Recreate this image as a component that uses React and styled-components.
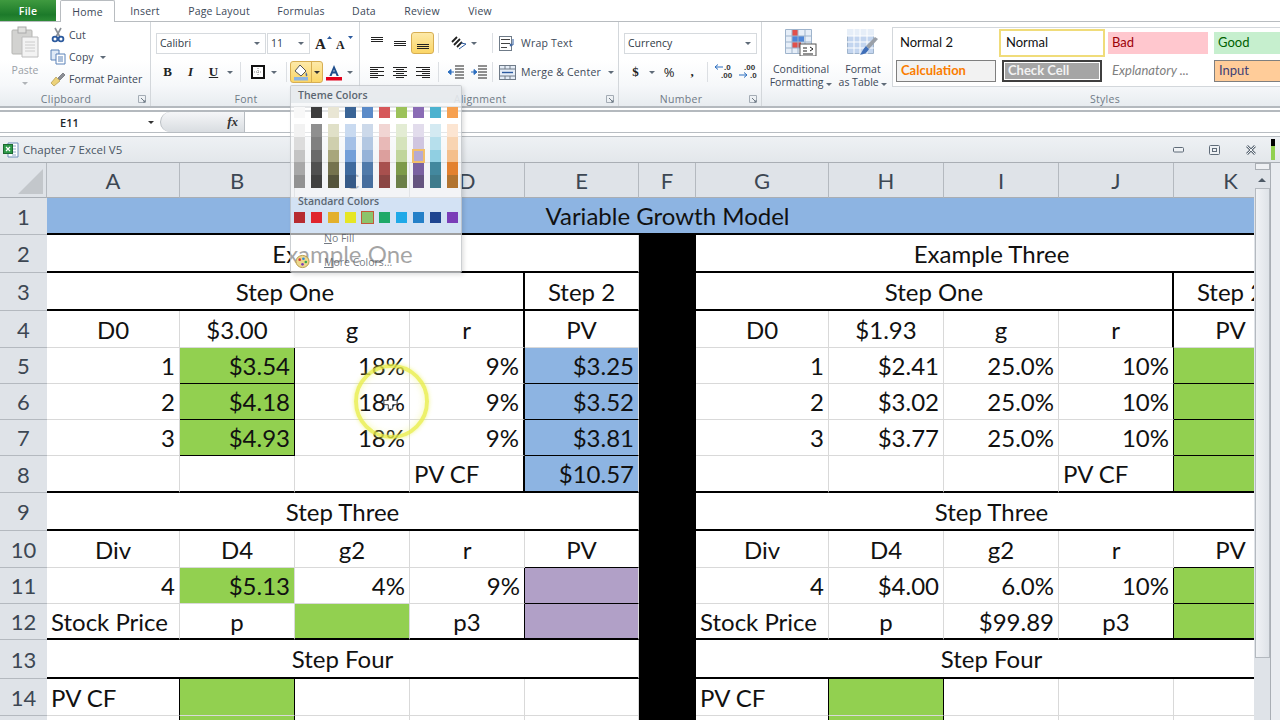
import styled, {createGlobalStyle} from 'styled-components';

const BLUE = '#8db4e2';
const GREEN = '#92d050';
const PURPLE = '#b1a0c7';
const THICK = '2px solid #000';
const THIN = '1px solid #000';

const Global = createGlobalStyle`
  html, body {
    margin: 0;
    padding: 0;
    background: #fff;
  }
  * {
    box-sizing: border-box;
  }
`;

const Page = styled.div`
  position: relative;
  display: flex;
  flex-direction: column;
  width: 1280px;
  height: 720px;
  overflow: hidden;
  font-family: 'Open Sans', sans-serif;
  color: #3c4858;
`;

const Tabs = styled.div`
  display: flex;
  align-items: stretch;
  height: 22px;
  border-bottom: 1px solid #b8bcc0;
  font-size: 10.5px;
  letter-spacing: 0.2px;
`;

const FileTab = styled.div`
  display: flex;
  align-items: center;
  justify-content: center;
  width: 56px;
  margin-right: 4px;
  color: #fff;
  font-weight: 600;
  background: linear-gradient(#3f9a3f, #1c7a2a 70%, #2c8b35);
`;

const Tab = styled.div`
  display: flex;
  align-items: center;
  justify-content: center;
  width: ${p => p.$w}px;
  height: ${p => (p.$active ? 22 : 21)}px;
  ${p => p.$active && `
    background: #fff;
    border: 1px solid #b8bcc0;
    border-bottom: 0;
    border-radius: 2px 2px 0 0;
  `}
`;

const Ribbon = styled.div`
  display: flex;
  height: 86px;
  background: linear-gradient(#fff 45%, #f6f8fa 75%, #e8ecf0);
  border-bottom: 2px solid #b4b9be;
  font-size: 10.5px;
`;

const Group = styled.div`
  position: relative;
  display: flex;
  flex-direction: column;
  width: ${p => p.$w}px;
  flex: none;
  border-right: ${p => (p.$last ? '0' : '1px solid #d3d7db')};
`;

const GroupBody = styled.div`
  flex: 1;
  display: flex;
  min-height: 0;
  padding-left: ${p => p.$pl || 0}px;
`;

const GroupLabel = styled.div`
  height: 13px;
  line-height: 12px;
  text-align: center;
  padding: ${p => (p.$styles ? '0 0 0 168px' : '0 18px 0 0')};
  color: #6f7a86;
  font-size: 10.5px;
  letter-spacing: 0.3px;
`;

const Launcher = styled.svg`
  position: absolute;
  right: 4px;
  bottom: 3px;
  width: 8px;
  height: 8px;
`;

const PasteBlock = styled.div`
  display: flex;
  flex-direction: column;
  align-items: center;
  width: 50px;
  padding-top: 4px;
  color: #9aa0a6;
  line-height: 13px;
`;

const PasteLabel = styled.span`
  margin: 6px 0 5px;
`;

const SmallList = styled.div`
  display: flex;
  flex-direction: column;
  gap: 6px;
  padding-top: 5px;
`;

const SmallItem = styled.div`
  display: flex;
  align-items: center;
  gap: 3px;
  height: 16px;
  white-space: nowrap;
`;

const Caret = styled.span`
  display: inline-block;
  width: 0;
  height: 0;
  flex: none;
  border-left: 3px solid transparent;
  border-right: 3px solid transparent;
  border-top: 3px solid ${p => p.$c || '#5f6b78'};
  margin-left: ${p => p.$ml || 0}px;
`;

const Rows = styled.div`
  display: flex;
  flex-direction: column;
  gap: 7px;
  padding: 10px 0 0 ${p => p.$pl || 0}px;
`;

const Row = styled.div`
  display: flex;
  align-items: center;
  height: 22px;
`;

const ComboBox = styled.div`
  display: flex;
  align-items: center;
  justify-content: space-between;
  width: ${p => p.$w}px;
  height: 21px;
  margin-right: ${p => p.$mr || 0}px;
  padding: 0 5px 0 3px;
  background: #fff;
  border: 1px solid #d6dade;
  color: #2f3a46;
  font-size: 10.5px;
`;

const Btn = styled.div`
  display: flex;
  align-items: center;
  justify-content: center;
  width: ${p => p.$w || 23}px;
  height: 22px;
  flex: none;
  color: #222;
  font-family: ${p => (p.$plain ? "'Open Sans', sans-serif" : "'Liberation Serif', serif")};
  font-weight: ${p => (p.$plain ? 400 : 700)};
  font-style: ${p => (p.$italic ? 'italic' : 'normal')};
  text-decoration: ${p => (p.$under ? 'underline' : 'none')};
  font-size: 13px;
  ${p => p.$on && `
    background: linear-gradient(#fde9a8, #fbd667);
    border: 1px solid #d7ae52;
    border-radius: 3px;
  `}
`;

const SplitBtn = styled.div`
  display: flex;
  align-items: center;
  width: 33px;
  height: 22px;
  flex: none;
  background: linear-gradient(#fde9a8, #fbd667);
  border: 1px solid #d7ae52;
  border-radius: 3px;
`;

const SplitMain = styled.div`
  display: flex;
  align-items: center;
  justify-content: center;
  width: 21px;
  height: 100%;
  border-right: 1px solid #d7ae52;
`;

const SplitDrop = styled.div`
  flex: 1;
  display: flex;
  align-items: center;
  justify-content: center;
`;

const Sep = styled.div`
  width: 1px;
  height: 20px;
  flex: none;
  background: #dcdfe3;
  margin: 0 ${p => p.$r ?? p.$l ?? 6}px 0 ${p => p.$l ?? 6}px;
`;

const TextBtn = styled.div`
  display: flex;
  align-items: center;
  gap: 4px;
  white-space: nowrap;
  font-size: 10.5px;
  letter-spacing: 0.2px;
`;

const BigAction = styled.div`
  display: flex;
  flex-direction: column;
  align-items: center;
  width: ${p => p.$w}px;
  padding-top: 7px;
  line-height: 13px;
  text-align: center;
  white-space: nowrap;
  font-size: 10.5px;
`;

const BigIcon = styled.div`
  height: 34px;
`;

const StyleGallery = styled.div`
  display: grid;
  grid-template-columns: repeat(4, 100px);
  grid-template-rows: 22px 22px;
  gap: 6px;
  align-self: flex-start;
  width: 388px;
  height: 60px;
  margin: 5px 0 0 -2px;
  padding: 4px 0 0 3px;
  background: #fff;
  border: 1px solid #d3d7db;
  border-right: 0;
  overflow: hidden;
`;

const StyleCell = styled.div`
  display: flex;
  align-items: center;
  padding: 0 0 2px 4px;
  font-family: Lato, sans-serif;
  font-size: 13px;
  font-style: ${p => (p.$italic ? 'italic' : 'normal')};
  font-weight: ${p => (p.$bold ? 700 : 400)};
  color: ${p => p.$c};
  background: ${p => p.$bg || 'transparent'};
  border: ${p => p.$border || '0'};
  ${p => p.$selected && `
    box-shadow: 0 0 0 1px #fff, 0 0 0 3px #f0dc7a;
  `}
  ${p => p.$double && `
    outline: 1px solid #fff;
    outline-offset: -3px;
  `}
`;

const FormulaBar = styled.div`
  display: flex;
  height: 23px;
  background: #fff;
  border-top: 2px solid #b4b9be;
  border-bottom: 1px solid #b8bdc2;
  margin-top: 2px;
`;

const NameBox = styled.div`
  display: flex;
  align-items: center;
  width: 160px;
  padding: 0 6px 0 60px;
  justify-content: space-between;
  color: #20262c;
  font-size: 11px;
  font-weight: 600;
`;

const FxPill = styled.div`
  display: flex;
  align-items: center;
  justify-content: flex-end;
  width: 85px;
  padding-right: 6px;
  background: linear-gradient(#f5f6f8, #d9dde1);
  border: 1px solid #b8bdc2;
  border-width: 0 1px 0 1px;
  border-radius: 11px 0 0 11px;
  font-family: 'Liberation Serif', serif;
  font-style: italic;
  font-weight: 700;
  font-size: 13px;
  color: #333;
`;

const SheetWindow = styled.div`
  flex: 1;
  display: flex;
  flex-direction: column;
  min-height: 0;
  margin-top: 3px;
  border-top: 1px solid #b8bdc2;
`;

const TitleBar = styled.div`
  display: flex;
  align-items: center;
  flex: none;
  height: 26px;
  padding-left: 3px;
  background: linear-gradient(#eef1f4, #e3e7eb);
  border-bottom: 1px solid #a9aeb4;
  font-size: 11.5px;
  color: #4a5664;
`;

const TitleText = styled.span`
  margin-left: 4px;
  flex: 1;
`;

const WinButtons = styled.div`
  display: flex;
  align-items: center;
  gap: 25px;
  margin-right: 14px;
`;

const Level = styled.div`
  width: 4px;
  height: 21px;
  margin-right: 5px;
  background: linear-gradient(#000 35%, ${GREEN} 35%);
`;

const SheetBody = styled.div`
  flex: 1;
  display: flex;
  min-height: 0;
`;

const Grid = styled.div`
  display: grid;
  width: 1254px;
  flex: none;
  overflow: hidden;
  grid-template-columns: 47px 133px 115px 115px 115px 114px 57px 133px 115px 115px 115px 114px;
  grid-template-rows: 35px 37px 38px 38px 37px 36px 36px 36px 37px 38px 37px 36px 36px 39px 37px 36px;
  font-family: Lato, sans-serif;
  color: #111;
`;

const ColHead = styled.div`
  display: flex;
  align-items: center;
  justify-content: center;
  background: #dfe3e8;
  border-right: 1px solid #b4b9bf;
  border-bottom: 1px solid #a9aeb4;
  color: #3d4753;
  font-size: 22px;
`;

const Corner = styled(ColHead)`
  justify-content: flex-end;
  align-items: flex-end;
  padding: 0 3px 3px 0;
`;

const RowHead = styled.div`
  display: flex;
  align-items: center;
  justify-content: center;
  background: #dfe3e8;
  border-bottom: 1px solid #b4b9bf;
  color: #3d4753;
  font-size: 22px;
`;

const Cell = styled.div`
  display: flex;
  align-items: center;
  justify-content: ${p => p.$a || 'flex-start'};
  grid-column: span ${p => p.$span || 1};
  padding: 0 4px;
  overflow: hidden;
  white-space: nowrap;
  font-size: 24px;
  background: ${p => p.$bg || '#fff'};
  border-right: ${p => p.$rb || '1px solid #d9d9d9'};
  border-bottom: ${p => p.$bb || '1px solid #d9d9d9'};
`;

const BlackCell = styled.div`
  background: #000;
`;

const Scrollbar = styled.div`
  display: flex;
  flex-direction: column;
  align-items: center;
  width: 16px;
  flex: none;
  background: #dfe3e8;
`;

const SplitBox = styled.div`
  width: 15px;
  height: 7px;
  margin-bottom: 8px;
  background: #eef0f3;
  border: 1px solid #a9aeb4;
`;

const ArrowUp = styled.div`
  width: 0;
  height: 0;
  margin-bottom: 6px;
  border-left: 4px solid transparent;
  border-right: 4px solid transparent;
  border-bottom: 4px solid #4e5a66;
`;

const Thumb = styled.div`
  width: 15px;
  height: 470px;
  background: linear-gradient(90deg, #f0f2f5, #dfe3e8);
  border: 1px solid #b4b9bf;
`;

const RightEdge = styled.div`
  flex: 1;
  background: #e9ecf0;
  border-left: 1px solid #a9aeb4;
`;

const ColorMenu = styled.div`
  position: absolute;
  left: 290px;
  top: 85px;
  width: 172px;
  height: 188px;
  background: rgba(255, 255, 255, 0.62);
  border: 1px solid rgba(170, 175, 180, 0.6);
  border-radius: 2px;
  box-shadow: 2px 2px 4px rgba(0, 0, 0, 0.12);
  font-size: 10.5px;
`;

const MenuHead = styled.div`
  height: 17px;
  margin-top: ${p => p.$mt || 0}px;
  padding-left: 7px;
  line-height: 19px;
  font-weight: 600;
  color: #5b6671;
  background: ${p => p.$bg || 'rgba(225, 229, 233, 0.75)'};
`;

const SwatchRow = styled.div`
  display: grid;
  grid-template-columns: repeat(10, 11px);
  column-gap: 6px;
  margin: ${p => p.$m || '4px 0 0 3px'};
`;

const Swatch = styled.div`
  width: 11px;
  height: 11px;
  background: ${p => p.$c};
  ${p => p.$pick && 'box-shadow: 0 0 0 1px #c25a3a;'}
`;

const Ramp = styled.div`
  display: flex;
  flex-direction: column;
`;

const RampStep = styled.div`
  position: relative;
  height: 12.8px;
  background: ${p => p.$c};
  ${p => p.$pick && 'box-shadow: inset 0 0 0 1px #f2bf6a, 0 0 0 1px #f2bf6a; z-index: 1;'}
`;

const MenuItem = styled.div`
  display: flex;
  align-items: center;
  height: 24px;
  padding-left: 1px;
  gap: 12px;
  color: rgba(70, 78, 88, 0.75);
`;

const MenuIconBox = styled.div`
  display: flex;
  align-items: center;
  justify-content: center;
  width: 20px;
  height: 18px;
`;

const Ring = styled.div`
  position: absolute;
  left: 354px;
  top: 364px;
  width: 75px;
  height: 75px;
  border-radius: 50%;
  border: 4px solid rgba(232, 238, 70, 0.8);
  box-shadow: 0 0 4px rgba(232, 238, 70, 0.6), inset 0 0 7px rgba(240, 244, 120, 0.55);
`;

const Pointer = styled.svg`
  position: absolute;
  left: 383px;
  top: 395px;
  width: 15px;
  height: 15px;
`;

const Paste = () => (
    <svg width="28" height="32" viewBox="0 0 28 32">
        <rect x="1" y="4" width="20" height="24" rx="1" fill="#d2d2d0" stroke="#b5b5b2"/>
        <rect x="7" y="1" width="8" height="6" fill="#e0e0de" stroke="#aaa"/>
        <path d="M11 11h16v20h-16z" fill="#f3f3f3" stroke="#bdbdbd"/>
        <path d="M14 16h10M14 19h10M14 22h10M14 25h10" stroke="#ccc"/>
    </svg>
);

const Scissors = () => (
    <svg width="16" height="16" viewBox="0 0 16 16">
        <path d="M5 1l5 9M11 1l-5 9" stroke="#8a8f96" strokeWidth="1.6"/>
        <circle cx="5" cy="12" r="2.4" fill="none" stroke="#2c5a9e" strokeWidth="1.8"/>
        <circle cx="11" cy="12" r="2.4" fill="none" stroke="#2c5a9e" strokeWidth="1.8"/>
    </svg>
);

const Copy = () => (
    <svg width="16" height="16" viewBox="0 0 16 16">
        <path d="M1 1h8v10h-8z" fill="#dfeaf7" stroke="#5a82b8"/>
        <path d="M6 5h9v10h-9z" fill="#fff" stroke="#5a82b8"/>
        <path d="M8 8h5M8 10h5M8 12h5" stroke="#5a82b8"/>
    </svg>
);

const Brush = () => (
    <svg width="16" height="16" viewBox="0 0 16 16">
        <path d="M1 12l5-6 4 4-6 5z" fill="#ecd27a" stroke="#a58a3a" strokeWidth="0.6"/>
        <path d="M8 7l5-5 2 2-5 5z" fill="#8c8f96" stroke="#55585e" strokeWidth="0.6"/>
    </svg>
);

const BorderIcon = () => (
    <svg width="14" height="14" viewBox="0 0 14 14">
        <rect x="1" y="1" width="12" height="12" fill="#fff" stroke="#111" strokeWidth="2"/>
        <path d="M7 3v8M3 7h8" stroke="#888" strokeDasharray="1 1"/>
    </svg>
);

const FillIcon = () => (
    <svg width="16" height="17" viewBox="0 0 16 17">
        <path d="M7 1l6 6-5 5-6-5z" fill="#fff" stroke="#555"/>
        <path d="M13 8c1 2 2 3 1 4s-2-1-1-4z" fill="#4a6fa8"/>
        <rect x="1" y="13" width="14" height="3.5" fill="#8db4e2"/>
    </svg>
);

const FontColor = () => (
    <svg width="16" height="17" viewBox="0 0 16 17">
        <path d="M8 1l-4.600 11h2.200l1-2.600h3l1 2.600h2.200zM7.300 7.600L8 5.600l.7 2z" fill="#1f4e8c"/>
        <rect x="0" y="13" width="16" height="3.5" fill="#e2001a"/>
    </svg>
);

const GrowFont = ({size, up}) => (
    <svg width="18" height="16" viewBox="0 0 18 16">
        <text x="1" y="14" fontFamily="Liberation Serif, serif" fontWeight="700" fontSize={size} fill="#222">A</text>
        <path d={up ? 'M13 4l2.500-3 2.500 3z' : 'M13 1l2.500 3 2.500-3z'} fill="#2c5a9e"/>
    </svg>
);

const Lines = ({rows}) => (
    <svg width="16" height="14" viewBox="0 0 16 14">
        {rows.map(([x1, x2, y]) => (
            <path key={y} d={`M${x1} ${y + 0.5}H${x2}`} stroke="#222"/>
        ))}
    </svg>
);

const Orient = () => (
    <svg width="16" height="14" viewBox="0 0 16 14">
        <path d="M1 6l5-5M3 9l6-6M6 11l5-5" stroke="#222" strokeWidth="1.8"/>
        <path d="M8 13l7-5-5-1" fill="none" stroke="#2c5a9e"/>
    </svg>
);

const Indent = ({flip}) => (
    <svg width="16" height="14" viewBox="0 0 16 14">
        <path d="M7 1h9M7 4h9M7 7h9M7 10h9M7 13h9" stroke="#222"/>
        <path d={flip ? 'M0 7h4M3 4.500l3 2.500-3 2.500z' : 'M6 7h-4M3 4.500l-3 2.500 3 2.500z'} stroke="#2c6fc0" fill="#2c6fc0"/>
    </svg>
);

const WrapIcon = () => (
    <svg width="18" height="15" viewBox="0 0 18 15">
        <rect x="0.500" y="0.500" width="12" height="14" fill="#fff" stroke="#6f7b88"/>
        <path d="M2 3.500h9M2 7.500h9M2 11.500h6" stroke="#444"/>
        <path d="M14 3v6h-3l1-1.500M11 9l1 1.500" fill="none" stroke="#2c5a9e"/>
    </svg>
);

const MergeIcon = () => (
    <svg width="18" height="15" viewBox="0 0 18 15">
        <rect x="0.500" y="0.500" width="16" height="14" fill="#e5edf7" stroke="#6f7b88"/>
        <path d="M0 4h17M0 11h17M6 0v4M11 0v4M6 11v4M11 11v4" stroke="#6f7b88"/>
        <path d="M3 7.500h11" stroke="#2c5a9e" strokeWidth="1.400"/>
    </svg>
);

const Decimal = ({flip}) => (
    <svg width="22" height="18" viewBox="0 0 22 18" fontFamily="Liberation Sans, sans-serif" fontSize="8" fontWeight="700" fill="#333">
        <text x={flip ? 6 : 10} y="7">{flip ? '.00' : '.0'}</text>
        <text x={flip ? 12 : 7} y="15">{flip ? '.0' : '.00'}</text>
        <path d={flip ? 'M1 12h8l-3-2.500M9 12l-3 2.500' : 'M9 4h-8l3-2.500M1 4l3 2.500'} fill="none" stroke="#2c6fc0"/>
    </svg>
);

const CondFormat = () => (
    <svg width="32" height="27" viewBox="0 0 32 27">
        <path d="M0.500 0.500h26v24h-26z" fill="#e6eef8" stroke="#9fb4cc"/>
        <rect x="7" y="1" width="6" height="6" fill="#e2504a"/>
        <rect x="7" y="7" width="12" height="6" fill="#4f86d8"/>
        <rect x="7" y="13" width="9" height="6" fill="#e2504a"/>
        <path d="M7 0v25M13 0v25M20 0v25M0 7h27M0 13h27M0 19h27" stroke="#9fb4cc"/>
        <rect x="15" y="15" width="16" height="12" fill="#fff" stroke="#555"/>
        <path d="M18 19h4M18 22h4M25 18l3 2-3 2M18 25h10" fill="none" stroke="#222"/>
    </svg>
);

const FormatTable = () => (
    <svg width="32" height="28" viewBox="0 0 32 28">
        <path d="M0.500 0.500h26v24h-26z" fill="#c3d5ef" stroke="#9fb4cc"/>
        <path d="M0 0h27v7h-27z" fill="#e6eef8"/>
        <path d="M7 0v25M13 0v25M20 0v25M0 7h27M0 13h27M0 19h27" stroke="#fff"/>
        <path d="M28 8l3 2-9 10-3-3z" fill="#9aa0a8"/>
        <path d="M19 17l3 3c-2 4-5 5-9 6 2-3 3-6 6-9z" fill="#3f6eb8"/>
    </svg>
);

const ExcelDoc = () => (
    <svg width="16" height="16" viewBox="0 0 16 16">
        <path d="M5 1h10v14h-10z" fill="#fff" stroke="#6f8fb8"/>
        <path d="M9 4h4M9 7h4M9 10h4M9 13h4" stroke="#8fa8c8"/>
        <rect x="0.500" y="2.500" width="9" height="9" fill="#2f9a4a" stroke="#1c6a30"/>
        <path d="M3 5l4 4M7 5l-4 4" stroke="#fff" strokeWidth="1.200"/>
    </svg>
);

const Palette = () => (
    <svg width="15" height="15" viewBox="0 0 16 16">
        <ellipse cx="8" cy="8" rx="7" ry="6.500" fill="#edd78c" stroke="#b59a48"/>
        <circle cx="5" cy="6" r="1.400" fill="#d83a3a"/>
        <circle cx="9" cy="5" r="1.400" fill="#2f8ad8"/>
        <circle cx="11.500" cy="8.500" r="1.400" fill="#3aa84a"/>
        <circle cx="8" cy="11" r="1.400" fill="#7a3db8"/>
    </svg>
);

const LauncherIcon = () => (
    <Launcher viewBox="0 0 8 8">
        <path d="M0.500 0.500h7v7h-7z" fill="none" stroke="#a4acb5"/>
        <path d="M3 3l4 4M7 5v2h-2" fill="none" stroke="#6f7a86"/>
    </Launcher>
);

const WinMin = () => (
    <svg width="11" height="6" viewBox="0 0 11 6">
        <rect x="0.500" y="0.500" width="10" height="4.500" rx="1" fill="#eef1f4" stroke="#5f6b78"/>
    </svg>
);

const WinMax = () => (
    <svg width="11" height="10" viewBox="0 0 11 10">
        <rect x="0.500" y="0.500" width="10" height="9" rx="1" fill="#eef1f4" stroke="#5f6b78"/>
        <rect x="3.500" y="3.500" width="4" height="3" fill="none" stroke="#5f6b78"/>
    </svg>
);

const WinClose = () => (
    <svg width="12" height="10" viewBox="0 0 12 10">
        <path d="M2 1l8 8M10 1l-8 8" stroke="#5f6b78" strokeWidth="2.600"/>
        <path d="M2 1l8 8M10 1l-8 8" stroke="#f2f4f6" strokeWidth="1"/>
    </svg>
);

const themeTop = ['#f8f8f8', '#3d3d3d', '#e9e6d4', '#3a6496', '#5b8bc8', '#d6585a', '#9cc25a', '#8a6cb5', '#4cb2cf', '#f6a050'];

const themeRamps = [
    ['#f2f2f2', '#dcdcdc', '#c4c4c4', '#a8a8a8', '#929292'],
    ['#8f8f8f', '#808080', '#6a6a6a', '#505050', '#404040'],
    ['#e0e0c8', '#cfcfae', '#a8a67c', '#75734e', '#55543c'],
    ['#c9daf0', '#a4c0e6', '#739fd8', '#3f6a9e', '#365a88'],
    ['#ccd9ea', '#b3c8e2', '#96b3d8', '#507aaa', '#466e9e'],
    ['#f1d5d3', '#e8b9b7', '#dc9f9d', '#a8504e', '#8b4644'],
    ['#e3ecd4', '#d5e3bc', '#c0d59c', '#7d9a4a', '#6b7f48'],
    ['#e2dcec', '#d0c6e0', '#b6aad2', '#7a62a0', '#65557f'],
    ['#d4eaf2', '#b6dfec', '#90cfe2', '#43889e', '#3f7b8c'],
    ['#fce5d2', '#f8d4b2', '#f4bf8c', '#e3812f', '#b27430'],
];

const standard = ['#b72b30', '#e0252e', '#e3b02c', '#e6e625', '#8cc46c', '#1fa968', '#1ea9e8', '#2480c8', '#1f4590', '#7a3db8'];

const colLetters = ['A', 'B', 'C', 'D', 'E', 'F', 'G', 'H', 'I', 'J', 'K'];

const R = 'flex-end';
const C = 'center';

const num = (t, extra) => ({t, a: R, ...extra});
const mid = (t, extra) => ({t, a: C, ...extra});
const blank = extra => ({t: '', ...extra});

// a row of five cells, for either block
const header = (...names) => names.map((n, i) => mid(n, i === 3 ? {rb: THICK} : {}));
const wide = (t, span = 5) => [mid(t, {span, bb: THICK})];

const leftBlock = [
    wide('Example One'),
    [mid('Step One', {span: 4, bb: THICK, rb: THICK}), mid('Step 2', {bb: THICK})],
    header('D0', '$3.00', 'g', 'r', 'PV'),
    [num('1'), num('$3.54', {bg: GREEN, rb: THIN, bb: THIN}), num('18%'), num('9%', {rb: THICK}), num('$3.25', {bg: BLUE, bb: THIN})],
    [num('2'), num('$4.18', {bg: GREEN, rb: THIN, bb: THIN}), num('18%'), num('9%', {rb: THICK}), num('$3.52', {bg: BLUE, bb: THIN})],
    [num('3'), num('$4.93', {bg: GREEN, rb: THIN, bb: THIN}), num('18%'), num('9%', {rb: THICK}), num('$3.81', {bg: BLUE, bb: THIN})],
    [blank({bb: THICK}), blank({bb: THICK}), blank({bb: THICK}), {t: 'PV CF', bb: THICK, rb: THICK}, num('$10.57', {bg: BLUE, bb: THICK})],
    wide('Step Three'),
    [mid('Div'), mid('D4'), mid('g2'), mid('r'), mid('PV', {bb: THIN})],
    [num('4'), num('$5.13', {bg: GREEN}), num('4%'), num('9%', {rb: THIN}), blank({bg: PURPLE, bb: THIN})],
    [{t: 'Stock Price', bb: THICK}, mid('p', {bb: THICK}), blank({bg: GREEN, bb: THICK}), mid('p3', {bb: THICK, rb: THIN}), blank({bg: PURPLE, bb: THICK})],
    wide('Step Four'),
    [{t: 'PV CF', rb: THIN}, blank({bg: GREEN, rb: THIN}), blank(), blank(), blank()],
    [blank({rb: THIN}), blank({bg: GREEN, rb: THIN}), blank(), blank(), blank()],
];

const rightBlock = [
    wide('Example Three'),
    [mid('Step One', {span: 4, bb: THICK, rb: THICK}), {t: 'Step 2', a: C, bb: THICK}],
    header('D0', '$1.93', 'g', 'r', 'PV'),
    [num('1'), num('$2.41'), num('25.0%'), num('10%', {rb: THIN}), blank({bg: GREEN, bb: THIN})],
    [num('2'), num('$3.02'), num('25.0%'), num('10%', {rb: THIN}), blank({bg: GREEN, bb: THIN})],
    [num('3'), num('$3.77'), num('25.0%'), num('10%', {rb: THIN}), blank({bg: GREEN, bb: THIN})],
    [blank({bb: THICK}), blank({bb: THICK}), blank({bb: THICK}), {t: 'PV CF', bb: THICK, rb: THIN}, blank({bg: GREEN, bb: THICK})],
    wide('Step Three'),
    [mid('Div'), mid('D4'), mid('g2'), mid('r'), mid('PV', {bb: THIN})],
    [num('4'), num('$4.00'), num('6.0%'), num('10%', {rb: THIN}), blank({bg: GREEN, bb: THIN})],
    [{t: 'Stock Price', bb: THICK}, mid('p', {bb: THICK}), num('$99.89', {bb: THICK}), mid('p3', {bb: THICK, rb: THIN}), blank({bg: GREEN, bb: THICK})],
    wide('Step Four'),
    [{t: 'PV CF', rb: THIN}, blank({bg: GREEN, rb: THIN}), blank(), blank(), blank()],
    [blank({rb: THIN}), blank({bg: GREEN, rb: THIN}), blank(), blank(), blank()],
];

const renderCells = (cells, key) => cells.map((c, i) => (
    <Cell key={`${key}-${i}`} $a={c.a} $span={c.span} $bg={c.bg} $rb={c.rb} $bb={c.bb}>{c.t}</Cell>
));

const topLines = [[2, 14, 1], [2, 14, 3], [2, 14, 5]];
const midLines = [[2, 14, 5], [2, 14, 7], [2, 14, 9]];
const lowLines = [[2, 14, 8], [2, 14, 10], [2, 14, 12]];
const leftLines = [[1, 15, 2], [1, 9, 4], [1, 15, 6], [1, 9, 8], [1, 15, 10], [1, 9, 12]];
const centerLines = [[1, 15, 2], [4, 12, 4], [1, 15, 6], [4, 12, 8], [1, 15, 10], [4, 12, 12]];
const rightLines = [[1, 15, 2], [7, 15, 4], [1, 15, 6], [7, 15, 8], [1, 15, 10], [7, 15, 12]];

const SheetRow = ({n, left, right}) => (
    <>
        <RowHead>{n}</RowHead>
        {renderCells(left, `l${n}`)}
        <BlackCell/>
        {renderCells(right, `r${n}`)}
    </>
);

const App = () => (
    <Page>
        <Global/>
        <Tabs>
            <FileTab>File</FileTab>
            <Tab $w={55} $active>Home</Tab>
            <Tab $w={60}>Insert</Tab>
            <Tab $w={88}>Page Layout</Tab>
            <Tab $w={76}>Formulas</Tab>
            <Tab $w={50}>Data</Tab>
            <Tab $w={66}>Review</Tab>
            <Tab $w={50}>View</Tab>
        </Tabs>
        <Ribbon>
            <Group $w={151}>
                <GroupBody>
                    <PasteBlock>
                        <Paste/>
                        <PasteLabel>Paste</PasteLabel>
                        <Caret $c="#b0b4b8"/>
                    </PasteBlock>
                    <SmallList>
                        <SmallItem><Scissors/>Cut</SmallItem>
                        <SmallItem><Copy/>Copy<Caret $ml={3}/></SmallItem>
                        <SmallItem><Brush/>Format Painter</SmallItem>
                    </SmallList>
                </GroupBody>
                <GroupLabel>Clipboard</GroupLabel>
                <LauncherIcon/>
            </Group>
            <Group $w={209}>
                <GroupBody>
                    <Rows $pl={5}>
                        <Row>
                            <ComboBox $w={110} $mr={1}>Calibri<Caret/></ComboBox>
                            <ComboBox $w={43} $mr={2}>11<Caret/></ComboBox>
                            <Btn $w={22}><GrowFont size={15} up/></Btn>
                            <Btn $w={20}><GrowFont size={12}/></Btn>
                        </Row>
                        <Row>
                            <Btn>B</Btn>
                            <Btn $italic>I</Btn>
                            <Btn $under>U</Btn>
                            <Btn $w={9}><Caret/></Btn>
                            <Sep/>
                            <Btn $w={22}><BorderIcon/></Btn>
                            <Btn $w={9}><Caret/></Btn>
                            <Sep $l={8} $r={3}/>
                            <SplitBtn>
                                <SplitMain><FillIcon/></SplitMain>
                                <SplitDrop><Caret $c="#333"/></SplitDrop>
                            </SplitBtn>
                            <Btn $w={22}><FontColor/></Btn>
                            <Btn $w={9}><Caret/></Btn>
                        </Row>
                    </Rows>
                </GroupBody>
                <GroupLabel>Font</GroupLabel>
            </Group>
            <Group $w={259}>
                <GroupBody>
                    <Rows $pl={5}>
                        <Row>
                            <Btn><Lines rows={topLines}/></Btn>
                            <Btn><Lines rows={midLines}/></Btn>
                            <Btn $on><Lines rows={lowLines}/></Btn>
                            <Sep $l={4} $r={9}/>
                            <Btn $w={22}><Orient/></Btn>
                            <Btn $w={8}><Caret/></Btn>
                            <Sep $l={14} $r={6}/>
                            <TextBtn><WrapIcon/>Wrap Text</TextBtn>
                        </Row>
                        <Row>
                            <Btn><Lines rows={leftLines}/></Btn>
                            <Btn><Lines rows={centerLines}/></Btn>
                            <Btn><Lines rows={rightLines}/></Btn>
                            <Sep $l={4} $r={5}/>
                            <Btn><Indent/></Btn>
                            <Btn><Indent flip/></Btn>
                            <Sep $l={2} $r={6}/>
                            <TextBtn><MergeIcon/>Merge &amp; Center<Caret $ml={3}/></TextBtn>
                        </Row>
                    </Rows>
                </GroupBody>
                <GroupLabel>Alignment</GroupLabel>
                <LauncherIcon/>
            </Group>
            <Group $w={143}>
                <GroupBody>
                    <Rows $pl={5}>
                        <Row>
                            <ComboBox $w={133}>Currency<Caret/></ComboBox>
                        </Row>
                        <Row>
                            <Btn $w={23}>$</Btn>
                            <Btn $w={9}><Caret/></Btn>
                            <Btn $w={26} $plain>%</Btn>
                            <Btn $w={20}>,</Btn>
                            <Sep $l={5} $r={5}/>
                            <Btn $w={24}><Decimal/></Btn>
                            <Btn $w={24}><Decimal flip/></Btn>
                        </Row>
                    </Rows>
                </GroupBody>
                <GroupLabel>Number</GroupLabel>
                <LauncherIcon/>
            </Group>
            <Group $w={518} $last>
                <GroupBody $pl={8}>
                    <BigAction $w={62}>
                        <BigIcon><CondFormat/></BigIcon>
                        Conditional
                        <span>Formatting <Caret/></span>
                    </BigAction>
                    <BigAction $w={62}>
                        <BigIcon><FormatTable/></BigIcon>
                        Format
                        <span>as Table <Caret/></span>
                    </BigAction>
                    <StyleGallery>
                        <StyleCell $c="#111">Normal 2</StyleCell>
                        <StyleCell $c="#111" $bg="#fff" $selected>Normal</StyleCell>
                        <StyleCell $c="#9c0006" $bg="#ffc7ce">Bad</StyleCell>
                        <StyleCell $c="#006100" $bg="#c6efce">Good</StyleCell>
                        <StyleCell $c="#fa7d00" $bg="#f2f2f2" $border="1px solid #7f7f7f" $bold>Calculation</StyleCell>
                        <StyleCell $c="#f2f2f2" $bg="#a5a5a5" $border="2px solid #3f3f3f" $bold $double>Check Cell</StyleCell>
                        <StyleCell $c="#7f7f7f" $italic>Explanatory ...</StyleCell>
                        <StyleCell $c="#3f3f76" $bg="#ffcc99" $border="1px solid #7f7f7f">Input</StyleCell>
                    </StyleGallery>
                </GroupBody>
                <GroupLabel $styles>Styles</GroupLabel>
            </Group>
        </Ribbon>
        <FormulaBar>
            <NameBox>E11<Caret $c="#333"/></NameBox>
            <FxPill>fx</FxPill>
        </FormulaBar>
        <SheetWindow>
            <TitleBar>
                <ExcelDoc/>
                <TitleText>Chapter 7 Excel V5</TitleText>
                <WinButtons>
                    <WinMin/>
                    <WinMax/>
                    <WinClose/>
                </WinButtons>
                <Level/>
            </TitleBar>
            <SheetBody>
                <Grid>
                    <Corner>
                        <svg width="25" height="25" viewBox="0 0 25 25">
                            <path d="M25 0v25h-25z" fill="#c3c7cb"/>
                        </svg>
                    </Corner>
                    {colLetters.map(l => <ColHead key={l}>{l}</ColHead>)}
                    <RowHead>1</RowHead>
                    <Cell $a={C} $span={11} $bg={BLUE} $rb="0" $bb={THICK}>Variable Growth Model</Cell>
                    {leftBlock.map((cells, i) => (
                        <SheetRow key={i} n={i + 2} left={cells} right={rightBlock[i]}/>
                    ))}
                </Grid>
                <Scrollbar>
                    <SplitBox/>
                    <ArrowUp/>
                    <Thumb/>
                </Scrollbar>
                <RightEdge/>
            </SheetBody>
        </SheetWindow>
        <ColorMenu>
            <MenuHead>Theme Colors</MenuHead>
            <SwatchRow>
                {themeTop.map(c => <Swatch key={c} $c={c}/>)}
            </SwatchRow>
            <SwatchRow $m="6px 0 0 3px">
                {themeRamps.map((ramp, i) => (
                    <Ramp key={i}>
                        {ramp.map(c => <RampStep key={c} $c={c} $pick={c === '#b6aad2'}/>)}
                    </Ramp>
                ))}
            </SwatchRow>
            <MenuHead $bg="transparent" $mt={4}>Standard Colors</MenuHead>
            <SwatchRow $m="3px 0 3px 3px">
                {standard.map(c => <Swatch key={c} $c={c} $pick={c === '#8cc46c'}/>)}
            </SwatchRow>
            <MenuItem>
                <MenuIconBox/>
                <span><u>N</u>o Fill</span>
            </MenuItem>
            <MenuItem>
                <MenuIconBox><Palette/></MenuIconBox>
                <span><u>M</u>ore Colors...</span>
            </MenuItem>
        </ColorMenu>
        <Ring/>
        <Pointer viewBox="0 0 17 17">
            <path d="M6 1h5v5h5v5h-5v5h-5v-5h-5v-5h5z" fill="#fff" stroke="#222"/>
        </Pointer>
    </Page>
);

export default App;
